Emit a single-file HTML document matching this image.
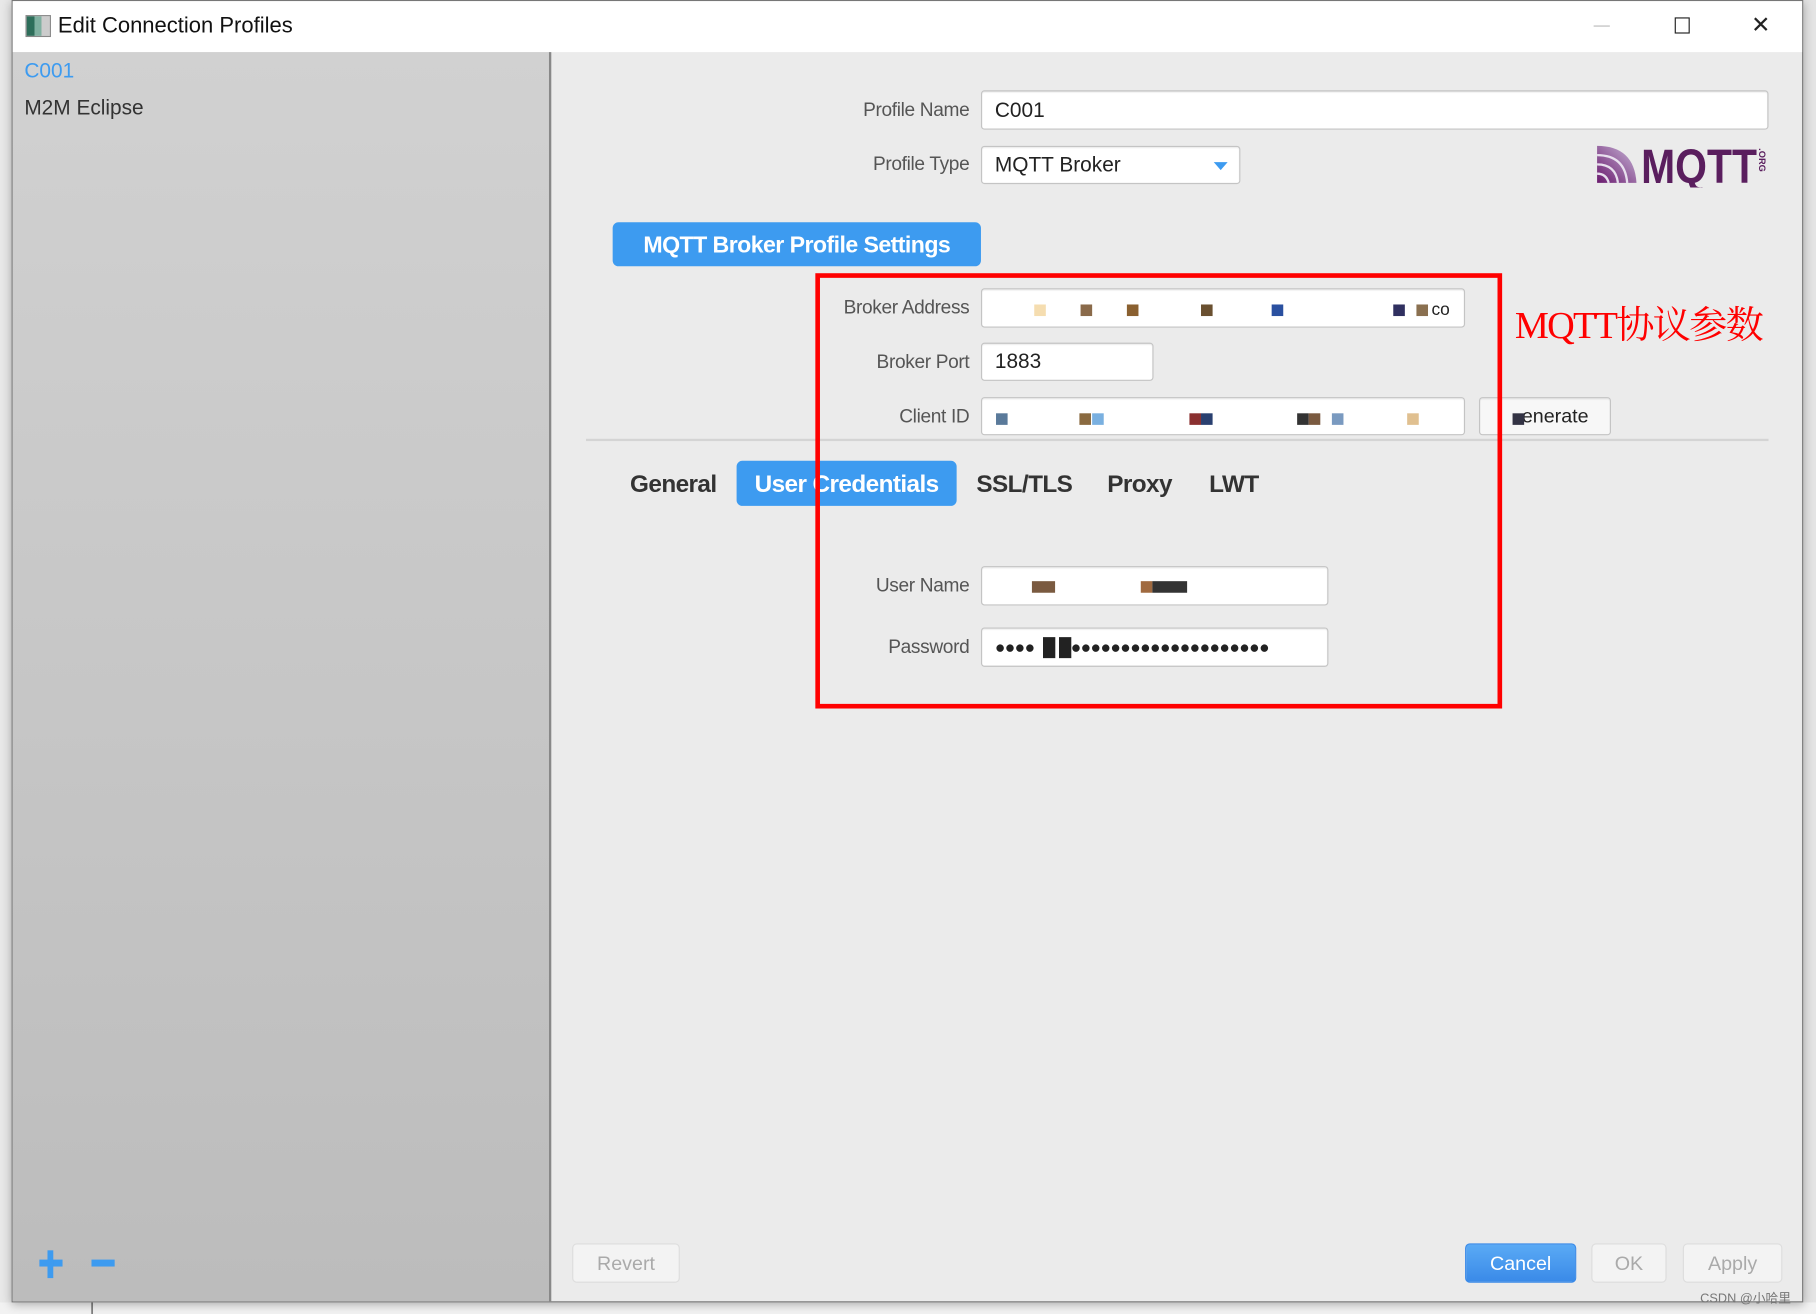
<!DOCTYPE html>
<html><head><meta charset="utf-8"><style>
html,body{margin:0;padding:0;width:1816px;height:1314px;overflow:hidden;background:#f0f0f0}
#w{position:absolute;left:0;top:0;width:1568px;height:1135px;transform:scale(1.15816,1.15771);transform-origin:0 0;font-family:"Liberation Sans","Noto Sans CJK SC",sans-serif;background:#f3f3f3}
.a{position:absolute}
.lbl{position:absolute;font-size:16.5px;color:#555;text-align:right;width:200px;letter-spacing:-0.3px}
.in{position:absolute;background:#fff;border:1px solid #c4c4c4;border-radius:3px;box-sizing:border-box;font-size:18px;color:#222;padding-left:11px;display:flex;align-items:center;box-shadow:inset 0 1px 1px rgba(0,0,0,.08)}
.px{position:absolute;width:10px;height:10px}
.tab{position:absolute;top:398px;height:39px;line-height:41px;font-size:21px;color:#333;font-weight:bold;letter-spacing:-0.5px}
.btn{position:absolute;top:1074px;height:34px;border:1px solid #ddd;border-radius:4px;background:#f3f3f3;color:#aaa;font-size:17px;text-align:center;line-height:34px;box-sizing:border-box}
</style></head><body><div id="w">
<div class="a" style="left:0;top:0;width:10px;height:1135px;background:#e8e8e8"></div>
<div class="a" style="left:1557px;top:0;width:11px;height:1135px;background:#e4e4e4"></div>
<div class="a" style="left:0;top:1125px;width:1568px;height:10px;background:#f2f2f2"></div>
<div class="a" style="left:79px;top:1125px;width:1px;height:10px;background:#444"></div>
<div class="a" style="left:10px;top:0;width:1547px;height:1125px;border:1px solid #777;box-sizing:border-box;background:#ebebeb;box-shadow:0 2px 8px rgba(0,0,0,.3)"></div>
<div class="a" style="left:11px;top:1px;width:1545px;height:44px;background:#fff"></div>
<div class="a" style="left:22px;top:13px;width:22px;height:19px;background:linear-gradient(90deg,#2d6e5a 0 35%,#7fb0a0 35% 65%,#ccc 65%);border:1px solid #888;box-sizing:border-box"></div>
<div class="a" style="left:50px;top:12px;font-size:19px;color:#111">Edit Connection Profiles</div>
<div class="a" style="left:1376px;top:22px;width:14px;height:1px;background:#bbb"></div>
<div class="a" style="left:1446px;top:15px;width:13px;height:14px;border:1.5px solid #222;box-sizing:border-box"></div>
<div class="a" style="left:1512px;top:9px;font-size:20px;color:#222;font-weight:300">✕</div>
<div class="a" style="left:11px;top:45px;width:463px;height:1079px;background:linear-gradient(#d1d1d1,#bcbcbc)"></div>
<div class="a" style="left:474px;top:45px;width:2px;height:1079px;background:#888"></div>
<div class="a" style="left:21px;top:51px;font-size:18px;color:#3d9bf0">C001</div>
<div class="a" style="left:21px;top:83px;font-size:18px;color:#333">M2M Eclipse</div>
<div class="a" style="left:34px;top:1088px;width:20px;height:6px;background:#3d9bf0"></div>
<div class="a" style="left:41px;top:1080px;width:5px;height:24px;background:#3d9bf0"></div>
<div class="a" style="left:79px;top:1088px;width:20px;height:6px;background:#3d9bf0"></div>
<div class="lbl" style="left:637px;top:86px">Profile Name</div>
<div class="in" style="left:847px;top:78px;width:680px;height:34px">C001</div>
<div class="lbl" style="left:637px;top:133px">Profile Type</div>
<div class="in" style="left:847px;top:126px;width:224px;height:33px">MQTT Broker<span style="position:absolute;right:10px;top:13px;width:0;height:0;border-left:6px solid transparent;border-right:6px solid transparent;border-top:7px solid #3d9bf0"></span></div>
<svg class="a" style="left:1377px;top:122px" width="152" height="40" viewBox="0 0 152 40">
<defs><linearGradient id="g" x1="0" y1="1" x2="1" y2="0"><stop offset="0" stop-color="#6a1a6e"/><stop offset="1" stop-color="#c8b8d8"/></linearGradient></defs>
<path d="M2 36 L2 4 Q34 4 36 36 Z" fill="url(#g)"/>
<path d="M2 12 Q26 12 28 36 M2 20 Q18 20 20 36 M2 28 Q10 28 12 36" stroke="#e8e0ee" stroke-width="2" fill="none"/>
<text x="40" y="36" font-family="Liberation Sans" font-weight="bold" font-size="42" fill="#5a1e5e" textLength="100" lengthAdjust="spacingAndGlyphs">MQTT</text>
<text x="142" y="6" font-size="8" font-weight="bold" fill="#5a1e5e" transform="rotate(90 142 6)">.ORG</text>
</svg>
<div class="a" style="left:529px;top:192px;width:318px;height:38px;background:#3d9bf0;border-radius:5px;color:#fff;font-size:20px;font-weight:bold;text-align:center;line-height:40px;letter-spacing:-0.5px">MQTT Broker Profile Settings</div>
<div class="lbl" style="left:637px;top:257px">Broker Address</div>
<div class="in" style="left:847px;top:249px;width:418px;height:34px"></div>
<div class="a" style="left:1236px;top:259px;font-size:15px;color:#222">co</div>
<div class="px" style="left:933px;top:263px;background:#8a6a4a"></div>
<div class="px" style="left:973px;top:263px;background:#8a6030"></div>
<div class="px" style="left:1037px;top:263px;background:#6a5030"></div>
<div class="px" style="left:893px;top:263px;background:#f5ddb0"></div>
<div class="px" style="left:1098px;top:263px;background:#2a50a0"></div>
<div class="px" style="left:1203px;top:263px;background:#303060"></div>
<div class="px" style="left:1223px;top:263px;background:#8a7050"></div>
<div class="lbl" style="left:637px;top:304px">Broker Port</div>
<div class="in" style="left:847px;top:296px;width:149px;height:33px">1883</div>
<div class="lbl" style="left:637px;top:351px">Client ID</div>
<div class="in" style="left:847px;top:343px;width:418px;height:33px"></div>
<div class="px" style="left:860px;top:357px;background:#5a7a9a"></div>
<div class="px" style="left:932px;top:357px;background:#8a6a40"></div>
<div class="px" style="left:943px;top:357px;background:#7ab0e0"></div>
<div class="px" style="left:1027px;top:357px;background:#8a3030"></div>
<div class="px" style="left:1037px;top:357px;background:#2a4070"></div>
<div class="px" style="left:1120px;top:357px;background:#333"></div>
<div class="px" style="left:1130px;top:357px;background:#7a5a40"></div>
<div class="px" style="left:1150px;top:357px;background:#7a9ac0"></div>
<div class="px" style="left:1215px;top:357px;background:#e0c090"></div>
<div class="in" style="left:1277px;top:343px;width:114px;height:33px;background:#f7f7f7;padding-left:36px;font-size:17px">enerate</div>
<div class="px" style="left:1306px;top:357px;background:#334"></div>
<div class="a" style="left:506px;top:379px;width:1021px;height:2px;background:#d4d4d4"></div>
<div class="tab" style="left:544px">General</div>
<div class="tab" style="left:636px;width:190px;background:#3d9bf0;border-radius:5px;color:#fff;text-align:center">User Credentials</div>
<div class="tab" style="left:843px">SSL/TLS</div>
<div class="tab" style="left:956px">Proxy</div>
<div class="tab" style="left:1044px">LWT</div>
<div class="lbl" style="left:637px;top:497px">User Name</div>
<div class="in" style="left:847px;top:489px;width:300px;height:34px"></div>
<div class="px" style="left:891px;top:502px;background:#7a5a40;width:20px"></div>
<div class="px" style="left:985px;top:502px;background:#a06a40"></div>
<div class="px" style="left:995px;top:502px;background:#333;width:30px"></div>
<div class="lbl" style="left:637px;top:550px">Password</div>
<div class="in" style="left:847px;top:542px;width:300px;height:34px;font-size:15px;letter-spacing:-0.5px;overflow:hidden;white-space:nowrap">●●●●&nbsp;&nbsp;█&nbsp;█●●●●●●●●●●●●●●●●●●●●</div>
<div class="a" style="left:704px;top:236px;width:593px;height:376px;border:4px solid #f00;box-sizing:border-box"></div>
<div class="a" style="left:1308px;top:255px;font-family:'Liberation Serif','Noto Serif CJK SC',serif;font-size:33px;color:#f00;letter-spacing:-1.5px">MQTT协议参数</div>
<div class="btn" style="left:494px;width:93px">Revert</div>
<div class="btn" style="left:1265px;width:96px;background:linear-gradient(#5aaaf5,#3a8ae8);color:#fff;border-color:#3a8ae8">Cancel</div>
<div class="btn" style="left:1374px;width:65px">OK</div>
<div class="btn" style="left:1453px;width:86px">Apply</div>
<div class="a" style="left:1468px;top:1113px;font-size:11px;color:#777">CSDN @小哈里</div>
</div></body></html>
